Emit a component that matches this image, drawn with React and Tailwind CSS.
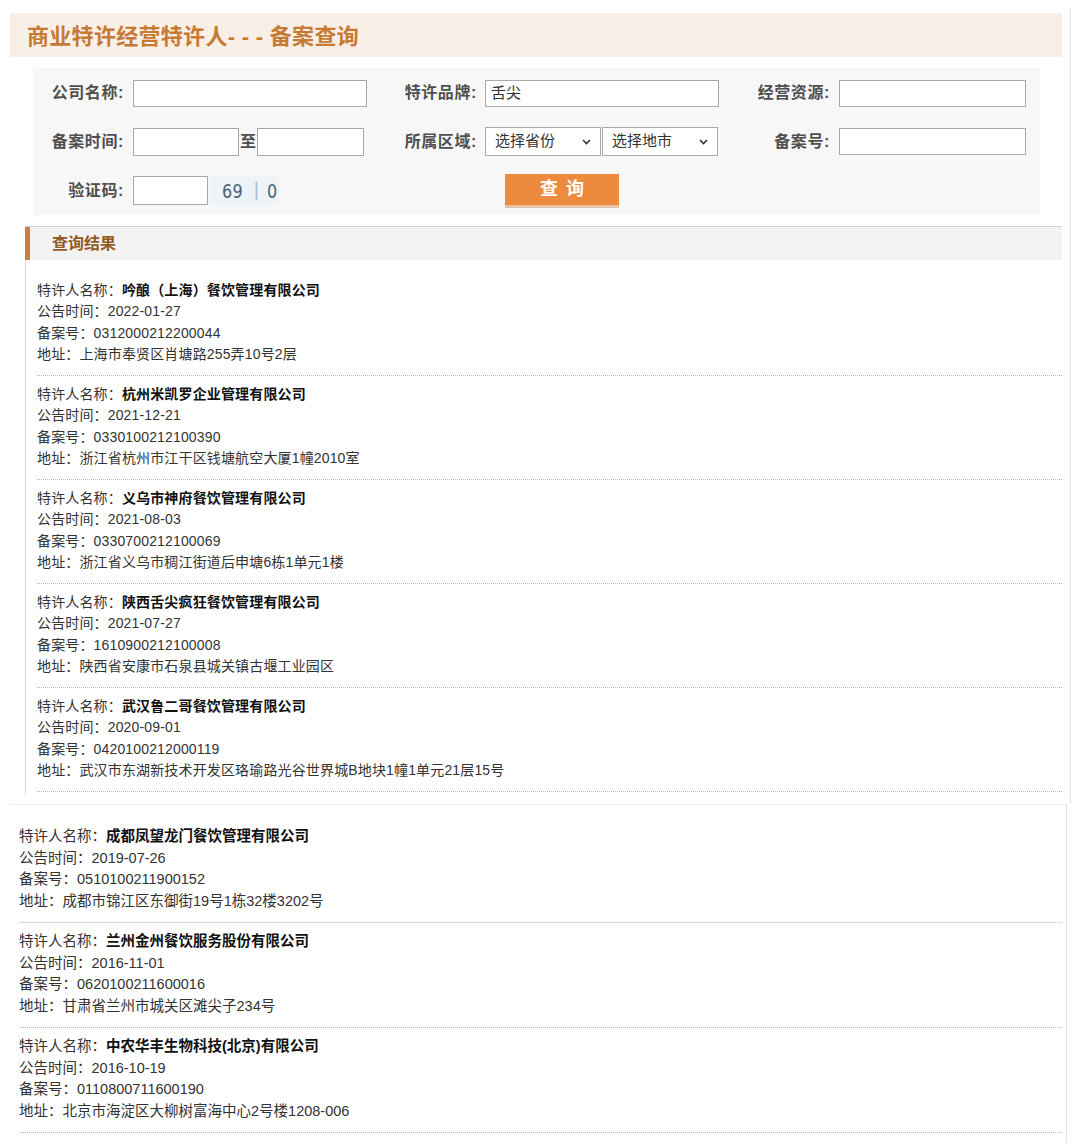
import React from "react";

const topItems = [
  { name: "吟酿（上海）餐饮管理有限公司", date: "2022-01-27", no: "0312000212200044", addr: "上海市奉贤区肖塘路255弄10号2层" },
  { name: "杭州米凯罗企业管理有限公司", date: "2021-12-21", no: "0330100212100390", addr: "浙江省杭州市江干区钱塘航空大厦1幢2010室" },
  { name: "义乌市神府餐饮管理有限公司", date: "2021-08-03", no: "0330700212100069", addr: "浙江省义乌市稠江街道后申塘6栋1单元1楼" },
  { name: "陕西舌尖疯狂餐饮管理有限公司", date: "2021-07-27", no: "1610900212100008", addr: "陕西省安康市石泉县城关镇古堰工业园区" },
  { name: "武汉鲁二哥餐饮管理有限公司", date: "2020-09-01", no: "0420100212000119", addr: "武汉市东湖新技术开发区珞瑜路光谷世界城B地块1幢1单元21层15号" },
];

const bottomItems = [
  { name: "成都凤望龙门餐饮管理有限公司", date: "2019-07-26", no: "0510100211900152", addr: "成都市锦江区东御街19号1栋32楼3202号" },
  { name: "兰州金州餐饮服务股份有限公司", date: "2016-11-01", no: "0620100211600016", addr: "甘肃省兰州市城关区滩尖子234号" },
  { name: "中农华丰生物科技(北京)有限公司", date: "2016-10-19", no: "0110800711600190", addr: "北京市海淀区大柳树富海中心2号楼1208-006" },
];

function Entry({ item, big }) {
  return (
    <div
      className={
        big
          ? "pt-[8px] pb-[10px] border-b border-dotted border-[#b5b5b5] text-[14.5px] leading-[21.5px] text-[#333]"
          : "pt-[8px] pb-[10px] border-b border-dotted border-[#b5b5b5] text-[14px] leading-[21.25px] text-[#333] tracking-[0.15px]"
      }
    >
      <div>
        特许人名称：<span className="font-bold text-[#111]">{item.name}</span>
      </div>
      <div>公告时间：{item.date}</div>
      <div>备案号：{item.no}</div>
      <div>地址：{item.addr}</div>
    </div>
  );
}

function Label({ w, children }) {
  return (
    <div className={`${w} text-right text-[16px] font-bold text-[#4f4f4f] leading-none tracking-[0.6px]`}>{children}</div>
  );
}

function Chevron() {
  return (
    <svg width="9" height="6" viewBox="0 0 9 6" className="shrink-0">
      <path d="M1 1 L4.5 4.5 L8 1" fill="none" stroke="#333" strokeWidth="1.6" />
    </svg>
  );
}

function Select({ text, extra }) {
  return (
    <div className={`${extra} w-[116px] h-[29px] border border-[#a8a8a8] bg-white flex items-center justify-between pl-[9px] pr-[9px] text-[15px] text-[#333]`}>
      <span>{text}</span>
      <Chevron />
    </div>
  );
}

export default function App() {
  return (
    <div className="w-[1080px] min-h-[1145px] bg-white font-['Liberation_Sans','Noto_Sans_CJK_SC',sans-serif] overflow-hidden">
      {/* top capture */}
      <div className="mt-[8px] w-[1071px] border-r border-[#e4e4e4] pt-[5px] pb-[9px]">
        <div className="ml-[10px] w-[1052px] h-[44px] bg-[#f8efe6] flex items-center pl-[17px] pt-[2px]">
          <span className="text-[22px] font-bold text-[#c67a33] tracking-[0.3px]">商业特许经营特许人- - - 备案查询</span>
        </div>

        <div className="ml-[33px] mt-[11px] w-[1007px] bg-[#f7f7f7]">
          <div className="flex items-center h-[49px] pt-[1px]">
            <Label w="w-[91px]">公司名称:</Label>
            <div className="ml-[9px] w-[234px] h-[27px] border border-[#a8a8a8] bg-white" />
            <Label w="w-[110px]">特许品牌:</Label>
            <div className="ml-[8px] w-[234px] h-[27px] border border-[#a8a8a8] bg-white flex items-center pl-[5px] text-[15px] text-[#333]">舌尖</div>
            <Label w="w-[111px]">经营资源:</Label>
            <div className="ml-[9px] w-[187px] h-[27px] border border-[#a8a8a8] bg-white" />
          </div>
          <div className="flex items-center h-[49px]">
            <Label w="w-[91px]">备案时间:</Label>
            <div className="ml-[9px] w-[106px] h-[28px] border border-[#a8a8a8] bg-white" />
            <div className="w-[18px] text-[16px] font-bold text-[#4f4f4f] text-center leading-none">至</div>
            <div className="w-[107px] h-[28px] border border-[#a8a8a8] bg-white" />
            <Label w="w-[113px]">所属区域:</Label>
            <Select text="选择省份" extra="ml-[8px]" />
            <Select text="选择地市" extra="ml-[1px]" />
            <Label w="w-[112px]">备案号:</Label>
            <div className="ml-[9px] w-[187px] h-[27px] border border-[#a8a8a8] bg-white" />
          </div>
          <div className="flex items-center h-[49px]">
            <Label w="w-[91px]">验证码:</Label>
            <div className="ml-[9px] w-[75px] h-[29px] border border-[#a8a8a8] bg-white" />
            <div className="ml-[1px] w-[70px] h-[29px] bg-[#edf3f7] flex items-center pl-[13px] text-[20px] text-[#48657a] font-['DejaVu_Sans',sans-serif]">
              <span className="scale-x-[0.8] origin-left inline-block tracking-[0.5px]">69</span>
              <span className="ml-[5px] text-[#9fb4c4] text-[17px]">|</span>
              <span className="ml-[8px] scale-x-[0.8] origin-left inline-block">0</span>
            </div>
            <div className="ml-[226px] w-[114px] h-[34px] bg-[#ed8a3e] border-b-[3px] border-[#e5c3a8] flex items-center justify-center text-[18px] font-bold text-white tracking-[8px] pl-[8px]">
              查询
            </div>
          </div>
        </div>

        <div className="ml-[25px] mt-[11px] w-[1037px] border-t border-[#d2d2d2]">
          <div className="h-[33px] bg-[#f2f2f2] border-l-[5px] border-[#cd7c45] flex items-center pl-[22px]">
            <span className="text-[16px] font-bold text-[#94591f]">查询结果</span>
          </div>
        </div>
        <div className="ml-[25px] w-[1037px] border-l border-[#d5d5d5] pl-[11px] pt-[12px] pb-[3px]">
          {topItems.map((it) => (
            <Entry key={it.no} item={it} />
          ))}
        </div>
      </div>

      {/* bottom capture */}
      <div className="ml-[10px] w-[1057px] border-t border-[#ececec] border-r border-r-[#e2e2e2] pl-[9px] pr-[4px] pt-[13px] pb-[10px]">
        {bottomItems.map((it) => (
          <Entry key={it.no} item={it} big />
        ))}
      </div>
    </div>
  );
}
